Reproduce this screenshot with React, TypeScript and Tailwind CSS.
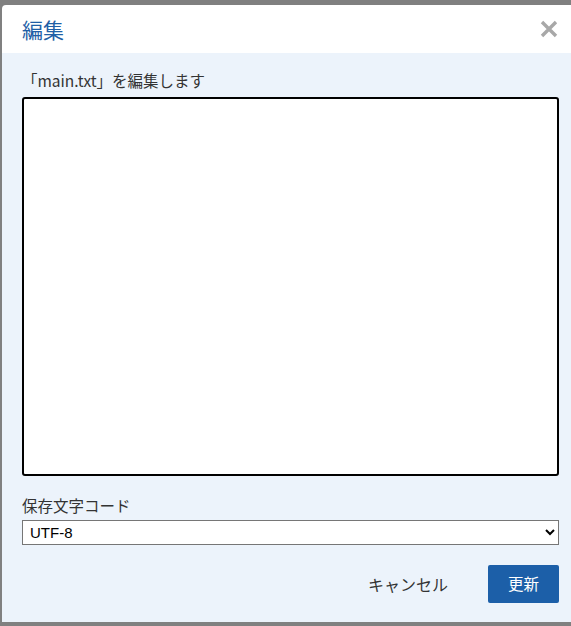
import React from 'react';

export default function App() {
  const font = { fontFamily: '"Noto Sans CJK JP", "Liberation Sans", sans-serif' };
  return (
    <div className="w-[571px] h-[626px] bg-[#808080] pt-[5px] pl-[2px] pb-[4px] overflow-hidden" style={font}>
      <div className="h-full flex flex-col bg-white rounded-tl-[4px] overflow-hidden">
        {/* header */}
        <div className="h-[48px] shrink-0 flex items-center justify-between pl-[20px] pr-[13px]">
          <h1 className="text-[21px] leading-none text-[#1f5fa6]">編集</h1>
          <button className="w-[18px] h-[18px] flex items-center justify-center">
            <svg width="18" height="18" viewBox="0 0 18 18">
              <path d="M2 2L16 16M16 2L2 16" stroke="#a8a8a8" strokeWidth="3.4" strokeLinecap="butt" />
            </svg>
          </button>
        </div>

        {/* body */}
        <div className="flex-1 flex flex-col bg-[#ecf3fb] pt-[16px] pl-[20px] pr-[12px] pb-[19px]">
          <label className="text-[15.5px] leading-[22px] text-[#333]">「main.txt」を編集します</label>
          <textarea className="mt-[6px] h-[379px] w-full bg-white border-2 border-black rounded-[3px] resize-none outline-none" />

          <label className="mt-[18px] text-[15.5px] leading-[22px] text-[#333]">保存文字コード</label>
          <select
            className="mt-[4px] h-[25px] w-full bg-white border border-[#767676] text-[15px] text-black pl-[3px]"
            style={{ fontFamily: '"Liberation Sans", sans-serif' }}
            defaultValue="UTF-8"
          >
            <option>UTF-8</option>
            <option>Shift_JIS</option>
            <option>EUC-JP</option>
          </select>

          <div className="mt-[20px] flex items-center justify-end">
            <button className="text-[16px] text-[#333] mr-[40px]">キャンセル</button>
            <button className="w-[71px] h-[38px] bg-[#1c5fa8] rounded-[2px] text-white text-[15.5px]">更新</button>
          </div>
        </div>
      </div>
    </div>
  );
}
